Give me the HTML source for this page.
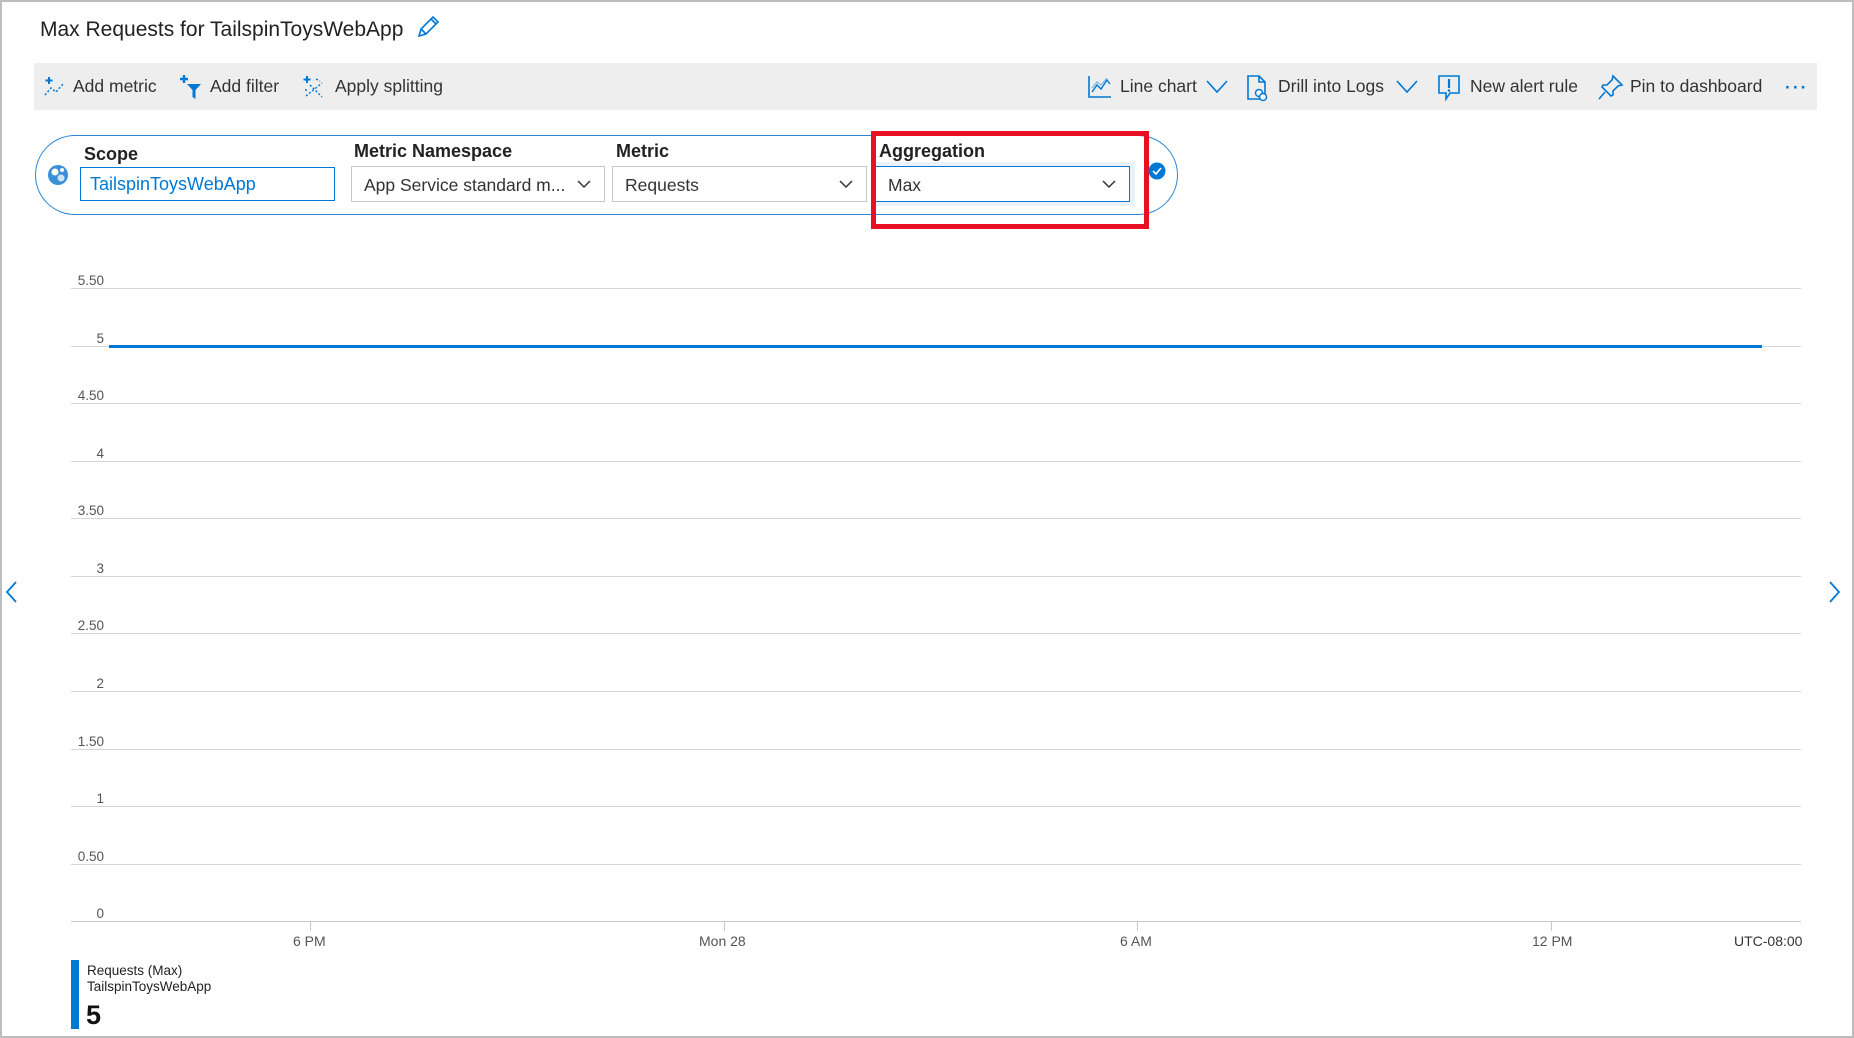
<!DOCTYPE html>
<html><head><meta charset="utf-8"><style>
*{margin:0;padding:0;box-sizing:border-box}
body{width:1854px;height:1038px;background:#fff;font-family:"Liberation Sans",sans-serif;position:relative;overflow:hidden;color:#222}
.a{position:absolute;white-space:nowrap}
.frame{position:absolute;left:0;top:0;width:1854px;height:1038px;border:2px solid #bdbdbd}
.tb{position:absolute;left:34px;top:63px;width:1783px;height:47px;background:#eeeeee}
.ti{position:absolute;top:75px;font-size:17.5px;color:#333;line-height:22px}
.lbl{position:absolute;font-size:18px;font-weight:bold;color:#222}
.sel{position:absolute;top:166px;height:36px;border:1px solid #c8c8c8;font-size:17.5px;color:#333;padding:8px 12px;background:#fff}
.chev{position:absolute;right:12px;top:12px}
.yl{position:absolute;left:40px;width:64px;text-align:right;font-size:13.5px;color:#555}
.gl{position:absolute;left:71px;width:1730px;height:1px;background:#d6d6d6}
.xl{position:absolute;top:933px;font-size:14px;color:#555}
</style></head><body>
<div class="frame"></div>
<div class="a" style="left:40px;top:18px;font-size:21px;color:#222">Max Requests for TailspinToysWebApp</div>
<svg class="a" style="left:415px;top:14px" width="26" height="26" viewBox="0 0 26 26"><path d="M4 22 L6 15 L18 3 L23 8 L11 20 Z M6 15 L11 20 M16 5 L21 10" fill="none" stroke="#0078d4" stroke-width="1.6"/></svg>
<div class="tb"></div>
<svg class="a" style="left:43px;top:76px" width="22" height="22"><path d="M2 19 L8 12 L13 16 L20 8" fill="none" stroke="#0078d4" stroke-width="1.5" stroke-dasharray="2 2"/><path d="M6 1v7M2.5 4.5h7" stroke="#0078d4" stroke-width="2"/></svg>
<div class="ti" style="left:73px">Add metric</div>
<svg class="a" style="left:179px;top:74px" width="24" height="26"><path d="M5 1v8M1 5h8" stroke="#0078d4" stroke-width="2.4"/><path d="M8 10h14l-5.5 6v9l-3-2v-7z" fill="#0078d4"/></svg>
<div class="ti" style="left:210px">Add filter</div>
<svg class="a" style="left:302px;top:75px" width="24" height="24"><path d="M5 1v7M1.5 4.5h7" stroke="#0078d4" stroke-width="2"/><path d="M4 21L20 8M8 10l12 12M3 15h3M14 4l4 2" fill="none" stroke="#0078d4" stroke-width="1.5" stroke-dasharray="2 2"/></svg>
<div class="ti" style="left:335px">Apply splitting</div>
<svg class="a" style="left:1087px;top:74px" width="26" height="26"><path d="M2 2v21h22" fill="none" stroke="#0078d4" stroke-width="1.6"/><path d="M5 18l5-7 4 4 6-9 3 4" fill="none" stroke="#0078d4" stroke-width="1.4"/><path d="M5 14l5-6 4 3 6-7" fill="none" stroke="#7ab8e8" stroke-width="1.2"/></svg>
<div class="ti" style="left:1120px">Line chart</div>
<svg class="a" style="left:1205px;top:78px" width="24" height="16"><path d="M2 3l10 11 10-11" fill="none" stroke="#0078d4" stroke-width="1.6"/></svg>
<svg class="a" style="left:1246px;top:74px" width="24" height="28"><path d="M2 2h11l6 6v17H2z M13 2v6h6" fill="none" stroke="#0078d4" stroke-width="1.6"/><circle cx="13" cy="19" r="3.5" fill="#fff" stroke="#0078d4" stroke-width="1.5"/><circle cx="17" cy="23" r="3.5" fill="#fff" stroke="#0078d4" stroke-width="1.5"/></svg>
<div class="ti" style="left:1278px">Drill into Logs</div>
<svg class="a" style="left:1395px;top:78px" width="24" height="16"><path d="M2 3l10 11 10-11" fill="none" stroke="#0078d4" stroke-width="1.6"/></svg>
<svg class="a" style="left:1437px;top:74px" width="24" height="28"><path d="M2 2h20v17H13l-4 6v-6H2z" fill="none" stroke="#0078d4" stroke-width="1.6"/><path d="M12 5v9" stroke="#0078d4" stroke-width="2.2"/><circle cx="12" cy="16.5" r="1.3" fill="#0078d4"/></svg>
<div class="ti" style="left:1470px">New alert rule</div>
<svg class="a" style="left:1598px;top:74px" width="26" height="26"><path d="M15 2l9 9-4 1-5 5 0 4-2 1-9-9 1-2 4 0 5-5z M7 18l-6 7" fill="none" stroke="#0078d4" stroke-width="1.6"/></svg>
<div class="ti" style="left:1630px">Pin to dashboard</div>
<div class="ti" style="left:1785px;top:76px;color:#0078d4;font-weight:bold;letter-spacing:2px">···</div>

<div class="a" style="left:35px;top:135px;width:1143px;height:80px;border:1.5px solid #2b88d8;border-radius:40px"></div>
<svg class="a" style="left:47px;top:164px" width="22" height="22"><circle cx="11" cy="11" r="10" fill="#3a8fd8"/><circle cx="8" cy="8" r="3.5" fill="#fff"/><circle cx="14" cy="14" r="3.5" fill="#cfe4f7"/><circle cx="15" cy="6" r="2" fill="#fff"/></svg>
<div class="lbl" style="left:84px;top:144px">Scope</div>
<div class="a" style="left:80px;top:167px;width:255px;height:34px;border:1.5px solid #0078d4;font-size:18px;color:#0078d4;padding:6px 9px">TailspinToysWebApp</div>
<div class="lbl" style="left:354px;top:141px">Metric Namespace</div>
<div class="sel" style="left:351px;width:254px">App Service standard m...<svg class="chev" width="16" height="10"><path d="M2 2l6 6 6-6" fill="none" stroke="#333" stroke-width="1.5"/></svg></div>
<div class="lbl" style="left:616px;top:141px">Metric</div>
<div class="sel" style="left:612px;width:255px">Requests<svg class="chev" width="16" height="10"><path d="M2 2l6 6 6-6" fill="none" stroke="#333" stroke-width="1.5"/></svg></div>
<div class="lbl" style="left:879px;top:141px">Aggregation</div>
<div class="a" style="left:872px;top:162px;width:263px;height:44px;background:#eaf3fc"></div>
<div class="sel" style="left:875px;width:255px;border:1.5px solid #0078d4">Max<svg class="chev" width="16" height="10"><path d="M2 2l6 6 6-6" fill="none" stroke="#333" stroke-width="1.5"/></svg></div>
<div class="a" style="left:871px;top:131px;width:278px;height:98px;border:5px solid #e81123"></div>
<svg class="a" style="left:1148px;top:162px" width="18" height="18"><circle cx="9" cy="9" r="8.5" fill="#0078d4"/><path d="M5 9l3 3 5-6" fill="none" stroke="#fff" stroke-width="1.6"/></svg>

<div class="gl" style="top:288px"></div><div class="yl" style="top:273px">5.50</div>
<div class="gl" style="top:346px"></div><div class="yl" style="top:331px">5</div>
<div class="gl" style="top:403px"></div><div class="yl" style="top:388px">4.50</div>
<div class="gl" style="top:461px"></div><div class="yl" style="top:446px">4</div>
<div class="gl" style="top:518px"></div><div class="yl" style="top:503px">3.50</div>
<div class="gl" style="top:576px"></div><div class="yl" style="top:561px">3</div>
<div class="gl" style="top:633px"></div><div class="yl" style="top:618px">2.50</div>
<div class="gl" style="top:691px"></div><div class="yl" style="top:676px">2</div>
<div class="gl" style="top:749px"></div><div class="yl" style="top:734px">1.50</div>
<div class="gl" style="top:806px"></div><div class="yl" style="top:791px">1</div>
<div class="gl" style="top:864px"></div><div class="yl" style="top:849px">0.50</div>
<div class="gl" style="top:921px;background:#c8c8c8"></div><div class="yl" style="top:906px">0</div>
<div class="a" style="left:109px;top:345px;width:1653px;height:3px;background:#0078d4"></div>
<div class="a" style="left:310px;top:921px;width:1px;height:10px;background:#c8c8c8"></div>
<div class="a" style="left:724px;top:921px;width:1px;height:10px;background:#c8c8c8"></div>
<div class="a" style="left:1137px;top:921px;width:1px;height:10px;background:#c8c8c8"></div>
<div class="a" style="left:1551px;top:921px;width:1px;height:10px;background:#c8c8c8"></div>
<div class="xl" style="left:293px">6 PM</div>
<div class="xl" style="left:699px">Mon 28</div>
<div class="xl" style="left:1120px">6 AM</div>
<div class="xl" style="left:1532px">12 PM</div>
<div class="xl" style="left:1734px;color:#333">UTC-08:00</div>
<svg class="a" style="left:4px;top:580px" width="16" height="24"><path d="M12 2L3 12l9 10" fill="none" stroke="#0078d4" stroke-width="1.8"/></svg>
<svg class="a" style="left:1826px;top:580px" width="16" height="24"><path d="M4 2l9 10-9 10" fill="none" stroke="#0078d4" stroke-width="1.8"/></svg>
<div class="a" style="left:71px;top:960px;width:8px;height:69px;background:#0078d4"></div>
<div class="a" style="left:87px;top:963px;font-size:13.5px;color:#222">Requests (Max)</div>
<div class="a" style="left:87px;top:979px;font-size:13.5px;color:#222">TailspinToysWebApp</div>
<div class="a" style="left:86px;top:1000px;font-size:27px;font-weight:bold;color:#111">5</div>
</body></html>
